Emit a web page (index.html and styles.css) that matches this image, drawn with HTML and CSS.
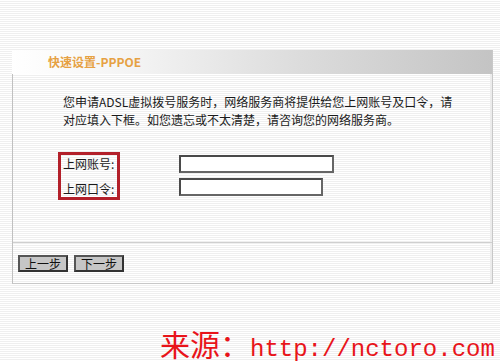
FILE: index.html
```html
<!DOCTYPE html>
<html lang="zh-CN">
<head>
    <meta charset="UTF-8">
    <meta name="viewport" content="width=device-width, initial-scale=1.0">
    <title>快速设置-PPPOE</title>
    <link rel="stylesheet" href="styles.css">
</head>
<body>
    <div class="page">
        <!-- 面板 -->
        <div class="panel">
            <div class="panel-head">
                <span class="title">快速设置-PPPOE</span>
            </div>
            <div class="panel-body">
                <div class="content">
                    <p class="intro">您申请ADSL虚拟拨号服务时，网络服务商将提供给您上网账号及口令，请<br>对应填入下框。如您遗忘或不太清楚，请咨询您的网络服务商。</p>
                    <div class="form">
                        <div class="labels">
                            <div class="label">上网账号:</div>
                            <div class="label">上网口令:</div>
                        </div>
                        <div class="fields">
                            <input class="field user" type="text">
                            <input class="field pass" type="password">
                        </div>
                    </div>
                </div>
                <div class="actions">
                    <button class="btn">上一步</button>
                    <button class="btn">下一步</button>
                </div>
            </div>
        </div>

        <!-- 来源 -->
        <div class="source"><span class="cn">来源：</span><span class="url">http://nctoro.com</span></div>
    </div>
</body>
</html>
```

FILE: styles.css
```css
/* 背景条纹 */
html, body {
    margin: 0;
    height: 100%;
    overflow: hidden;
}
body {
    font-family: "Noto Sans CJK SC", "DejaVu Sans", sans-serif;
    font-size: 12px;
    color: #1a1a1a;
    background: repeating-linear-gradient(#ffffff 0 1px, #efefef 1px 2px);
}

.page {
    padding: 50px 7px 0 12px;
}

/* 面板 */
.panel {
    width: 481px;
}
.panel-head {
    height: 24px;
    padding-left: 36px;
    background: linear-gradient(to right, #ffffff 0%, #f4f4f4 25%, #dcdcdc 60%, #c4c4c4 100%);
    border-right: 1px solid #c8c8c8;
}
.title {
    line-height: 24px;
    font-weight: bold;
    color: #e6a143;
    font-family: "Noto Sans CJK SC", "Liberation Serif", serif;
}

.panel-body {
    height: 209px;
    border-left: 1px solid #c0c0c0;
    border-right: 1px solid #c8c8c8;
    border-bottom: 1px solid #c8c8c8;
    box-shadow: inset -2px 0 0 #ececec;
}
.content {
    height: 169px;
    padding-left: 50px;
    box-sizing: border-box;
    padding-top: 19px;
    border-bottom: 1px solid #cfcfcf;
}
.intro {
    margin: 0;
    line-height: 18px;
    white-space: nowrap;
}

/* 表单 */
.form {
    display: flex;
    margin-top: 23px;
    margin-left: -5px;
}
.labels {
    width: 54px;
    height: 42px;
    border: 3px solid #b3202a;
    padding-left: 2px;
}
.label {
    line-height: 17px;
    white-space: nowrap;
}
.label + .label {
    margin-top: 8px;
}
.fields {
    display: flex;
    flex-direction: column;
    gap: 5px;
    margin-left: 59px;
    padding-top: 3px;
}
.field {
    height: 18px;
    box-sizing: border-box;
    border: 2px solid #4a4a4a;
    border-right-color: #666;
    border-bottom-color: #666;
    background: #fff;
    padding: 0;
    margin: 0;
}
.field.user { width: 155px; }
.field.pass { width: 144px; }

/* 按钮 */
.actions {
    display: flex;
    gap: 6px;
    padding: 12px 0 0 5px;
}
.btn {
    width: 50px;
    height: 17px;
    padding: 0;
    margin: 0;
    font-family: "Noto Sans CJK SC", sans-serif;
    font-size: 12px;
    line-height: 13px;
    color: #111;
    background: #c6c6c6;
    border: 2px solid #333;
    border-top-color: #555;
    border-left-color: #555;
}

/* 来源 */
.source {
    margin-top: 44px;
    margin-left: 148px;
    color: #e8141a;
    white-space: nowrap;
    line-height: 30px;
}
.source .cn {
    font-size: 30px;
    font-family: "Noto Sans CJK SC", serif;
}
.source .url {
    font-size: 24px;
    font-family: "Liberation Mono", monospace;
}
```
